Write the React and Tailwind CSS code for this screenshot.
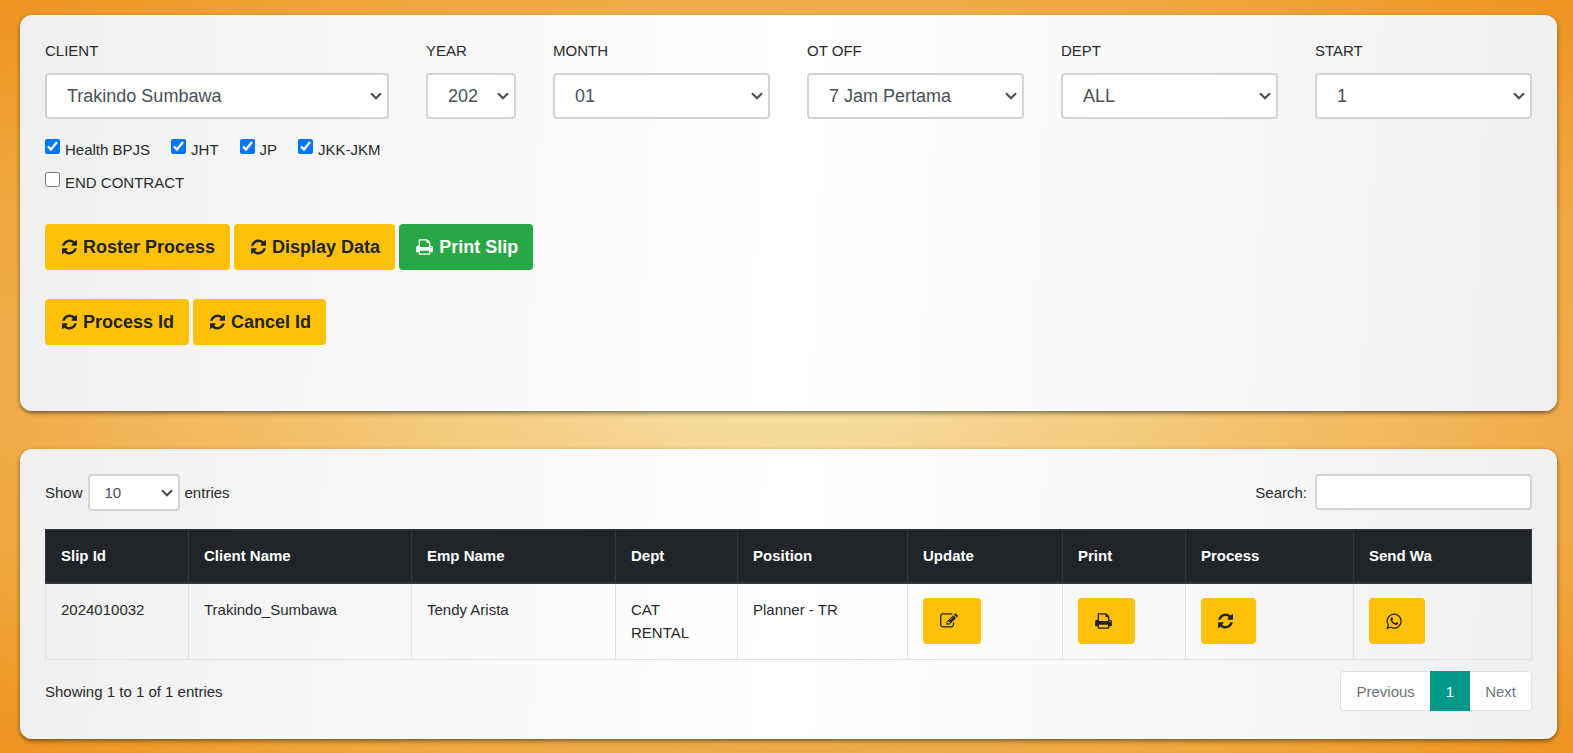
const ICONS = {
  refresh: {
    width: 1536,
    className: "w-[15px]",
    d: "M1511 1056q0 5-1 7-64 268-268 434.5t-478 166.5q-146 0-282.5-55t-243.5-157l-129 129q-19 19-45 19t-45-19-19-45v-448q0-26 19-45t45-19h448q26 0 45 19t19 45-19 45l-137 137q71 66 161 102t187 36q134 0 250-65t186-179q11-17 53-117 8-23 30-23h192q13 0 22.5 9.5t9.5 22.5zm25-800v448q0 26-19 45t-45 19h-448q-26 0-45-19t-19-45 19-45l138-138q-148-137-349-137-134 0-250 65t-186 179q-11 17-53 117-8 23-30 23h-199q-13 0-22.5-9.5t-9.5-22.5v-7q65-268 270-434.5t480-166.5q146 0 284 55.5t245 156.5l130-129q19-19 45-19t45 19 19 45z",
  },
  print: {
    width: 1664,
    className: "w-[17px]",
    d: "M384 1536h896v-256h-896v256zm0-640h896v-384h-160q-40 0-68-28t-28-68v-160h-640v640zm1152 64q0-26-19-45t-45-19-45 19-19 45 19 45 45 19 45-19 19-45zm128 0v416q0 13-9.5 22.5t-22.5 9.5h-224v160q0 40-28 68t-68 28h-960q-40 0-68-28t-28-68v-160h-224q-13 0-22.5-9.5t-9.5-22.5v-416q0-79 56.5-135.5t135.5-56.5h64v-544q0-40 28-68t68-28h672q40 0 88 20t76 48l152 152q28 28 48 76t20 88v256h64q79 0 135.5 56.5t56.5 135.5z",
  },
  edit: {
    width: 1792,
    className: "w-[18px]",
    d: "M888 1184l116-116-152-152-116 116v56h96v96h56zm440-720q-16-16-33 1l-350 350q-17 17-1 33t33-1l350-350q17-17 1-33zm80 594v190q0 119-84.5 203.5t-203.5 84.5h-832q-119 0-203.5-84.5t-84.5-203.5v-832q0-119 84.5-203.5t203.5-84.5h832q63 0 117 25 15 7 18 23 3 17-9 29l-49 49q-14 14-32 8-23-6-45-6h-832q-66 0-113 47t-47 113v832q0 66 47 113t113 47h832q66 0 113-47t47-113v-126q0-13 9-22l64-64q15-15 35-7t20 29zm-96-738l288 288-672 672h-288v-288zm444 132l-92 92-288-288 92-92q28-28 68-28t68 28l152 152q28 28 28 68t-28 68z",
  },
  whatsapp: {
    width: 1536,
    className: "w-[16px]",
    d: "M985 1011q13 0 97.5 44t89.5 53q2 5 2 15 0 33-17 76-16 39-71 65.5t-102 26.5q-57 0-190-62-98-45-170-118t-148-185q-72-107-71-194v-8q3-91 74-158 24-22 52-22 6 0 18 1.5t19 1.5q19 0 26.5 6.5t15.5 27.5q8 20 33 88t25 75q0 21-34.5 57.5t-34.5 46.5q0 7 5 15 34 73 102 137 56 53 151 101 12 7 22 7 15 0 54-48.5t52-48.5zm-203 530q127 0 243.5-50t200.5-134 134-200.5 50-243.5-50-243.5-134-200.5-200.5-134-243.5-50-243.5 50-200.5 134-134 200.5-50 243.5q0 203 120 368l-79 233 242-77q158 104 345 104zm0-1382q153 0 292.5 60t240.5 161 161 240.5 60 292.5-60 292.5-161 240.5-240.5 161-292.5 60q-195 0-365-94l-417 134 136-405q-108-178-108-389 0-153 60-292.5t161-240.5 240.5-161 292.5-60z",
  },
};

function Icon({ name }) {
  const icon = ICONS[name];
  return (
    <svg viewBox={`0 0 ${icon.width} 1792`} className={`h-[18px] shrink-0 ${icon.className}`} fill="currentColor" aria-hidden="true">
      <path d={icon.d} />
    </svg>
  );
}

function Chevron() {
  return (
    <svg viewBox="0 0 12 8" className="pointer-events-none absolute top-1/2 right-[7px] h-2 w-3 -translate-y-1/2" fill="none" stroke="#495057" strokeWidth="2.2" aria-hidden="true">
      <path d="M1 1.2 6 6.2 11 1.2" />
    </svg>
  );
}

const FIELDS = [
  { id: "client", label: "CLIENT", value: "Trakindo Sumbawa", span: "col-span-3" },
  { id: "year", label: "YEAR", value: "2024", span: "col-span-1" },
  { id: "month", label: "MONTH", value: "01", span: "col-span-2" },
  { id: "otoff", label: "OT OFF", value: "7 Jam Pertama", span: "col-span-2" },
  { id: "dept", label: "DEPT", value: "ALL", span: "col-span-2" },
  { id: "start", label: "START", value: "1", span: "col-span-2" },
];

function SelectField({ id, label, value, span }) {
  return (
    <div className={`min-w-0 ${span}`}>
      <label htmlFor={id} className="mb-[11px] block leading-[22px]">{label}</label>
      <div className="relative">
        <select id={id} className={`h-[46px] w-full appearance-none overflow-hidden rounded border-2 border-[#ced4da] bg-white pl-5 text-lg text-[#495057] ${id === "year" ? "pr-[36px]" : "pr-6"}`}>
          <option>{value}</option>
        </select>
        <Chevron />
      </div>
    </div>
  );
}

function Check({ id, label, checked }) {
  return (
    <div className="flex items-start gap-[5px]">
      <input id={id} type="checkbox" defaultChecked={checked} className="mt-[2px] size-[15px]" />
      <label htmlFor={id} className="leading-[25px]">{label}</label>
    </div>
  );
}

function ActionButton({ icon, color, children }) {
  return (
    <button type="button" className={`flex h-[46px] items-center gap-[6px] rounded pr-[15px] pl-[17px] text-lg font-bold ${color}`}>
      <Icon name={icon} />
      {children}
    </button>
  );
}

function RowButton({ icon, label }) {
  return (
    <button type="button" aria-label={label} className="flex h-[46px] items-center rounded bg-[#ffc107] pr-[23px] pl-[17px] text-[#212529]">
      <Icon name={icon} />
    </button>
  );
}

const COLUMNS = [
  ["Slip Id", "w-[143px]"],
  ["Client Name", "w-[223px]"],
  ["Emp Name", "w-[204px]"],
  ["Dept", "w-[122px]"],
  ["Position", "w-[170px]"],
  ["Update", "w-[155px]"],
  ["Print", "w-[123px]"],
  ["Process", "w-[168px]"],
  ["Send Wa", "w-[178px]"],
];

const CARD =
  "rounded-xl bg-[linear-gradient(93deg,#f0f0f0_0%,#ffffff_50%,#f0f0f0_100%)] px-[25px] shadow-[0_2px_4px_rgba(0,0,0,0.5)]";
const YELLOW = "bg-[#ffc107] text-[#212529]";
const CELL = "border border-[#dee2e6] pt-[14px] pb-[15px] pl-[15px] pr-5 align-top";

export default function App() {
  return (
    <main className="flex min-h-screen flex-col gap-[38px] bg-[radial-gradient(ellipse_at_center,#f6e3a8_0%,#ee9420_100%)] px-5 pr-4 pt-[15px] pb-[14px] font-['Liberation_Sans',Arial,sans-serif] text-[15px] leading-[23px] text-[#292b2c]">
      <section className={`${CARD} pt-[25px] pb-[66px]`}>
        <div className="grid grid-cols-12 gap-x-[37px]">
          {FIELDS.map((f) => (
            <SelectField key={f.id} {...f} />
          ))}
        </div>
        <div className="mt-[18px] flex flex-col gap-2">
          <div className="flex gap-[21px]">
            <Check id="bpjs" label="Health BPJS" checked />
            <Check id="jht" label="JHT" checked />
            <Check id="jp" label="JP" checked />
            <Check id="jkk" label="JKK-JKM" checked />
          </div>
          <Check id="end" label="END CONTRACT" />
        </div>
        <div className="mt-[29px] flex gap-1">
          <ActionButton icon="refresh" color={YELLOW}>Roster Process</ActionButton>
          <ActionButton icon="refresh" color={YELLOW}>Display Data</ActionButton>
          <ActionButton icon="print" color="bg-[#28a745] text-white">Print Slip</ActionButton>
        </div>
        <div className="mt-[29px] flex gap-1">
          <ActionButton icon="refresh" color={YELLOW}>Process Id</ActionButton>
          <ActionButton icon="refresh" color={YELLOW}>Cancel Id</ActionButton>
        </div>
      </section>

      <section className={`${CARD} pt-[25px] pb-7`}>
        <div className="flex items-start justify-between">
          <div className="flex items-center gap-[5px]">
            <label htmlFor="length">Show</label>
            <div className="relative w-[92px]">
              <select id="length" className="h-[37px] w-full appearance-none rounded border-2 border-[#ced4da] bg-white pl-[15px] text-[15px] text-[#495057]">
                <option>10</option>
              </select>
              <Chevron />
            </div>
            <span>entries</span>
          </div>
          <div className="flex items-center gap-2">
            <label htmlFor="search">Search:</label>
            <input id="search" type="search" className="h-9 w-[217px] rounded border-2 border-[#ced4da] bg-white px-3 text-[15px]" />
          </div>
        </div>

        <table className="mt-[18px] w-full table-fixed border-collapse">
          <thead>
            <tr className="bg-[#212529] text-left text-white">
              {COLUMNS.map(([name, width]) => (
                <th key={name} className={`border border-b-2 border-[#32383e] px-[15px] pt-[14px] pb-[15px] font-bold ${width}`}>{name}</th>
              ))}
            </tr>
          </thead>
          <tbody>
            <tr>
              <td className={CELL}>2024010032</td>
              <td className={CELL}>Trakindo_Sumbawa</td>
              <td className={CELL}>Tendy Arista</td>
              <td className={CELL}>CAT RENTAL</td>
              <td className={CELL}>Planner - TR</td>
              <td className={CELL}><RowButton icon="edit" label="Update" /></td>
              <td className={CELL}><RowButton icon="print" label="Print" /></td>
              <td className={CELL}><RowButton icon="refresh" label="Process" /></td>
              <td className={CELL}><RowButton icon="whatsapp" label="Send Wa" /></td>
            </tr>
          </tbody>
        </table>

        <div className="mt-[11px] flex items-center justify-between">
          <p>Showing 1 to 1 of 1 entries</p>
          <nav aria-label="Pages" className="flex h-10 items-stretch text-[#6c757d]">
            <a href="#previous" className="flex items-center rounded-l border border-r-0 border-[#dee2e6] bg-white px-[15px]">Previous</a>
            <a href="#1" aria-current="page" className="flex items-center bg-[#009688] px-4 text-white">1</a>
            <a href="#next" className="flex items-center rounded-r border border-l-0 border-[#dee2e6] bg-white px-[15px]">Next</a>
          </nav>
        </div>
      </section>
    </main>
  );
}
